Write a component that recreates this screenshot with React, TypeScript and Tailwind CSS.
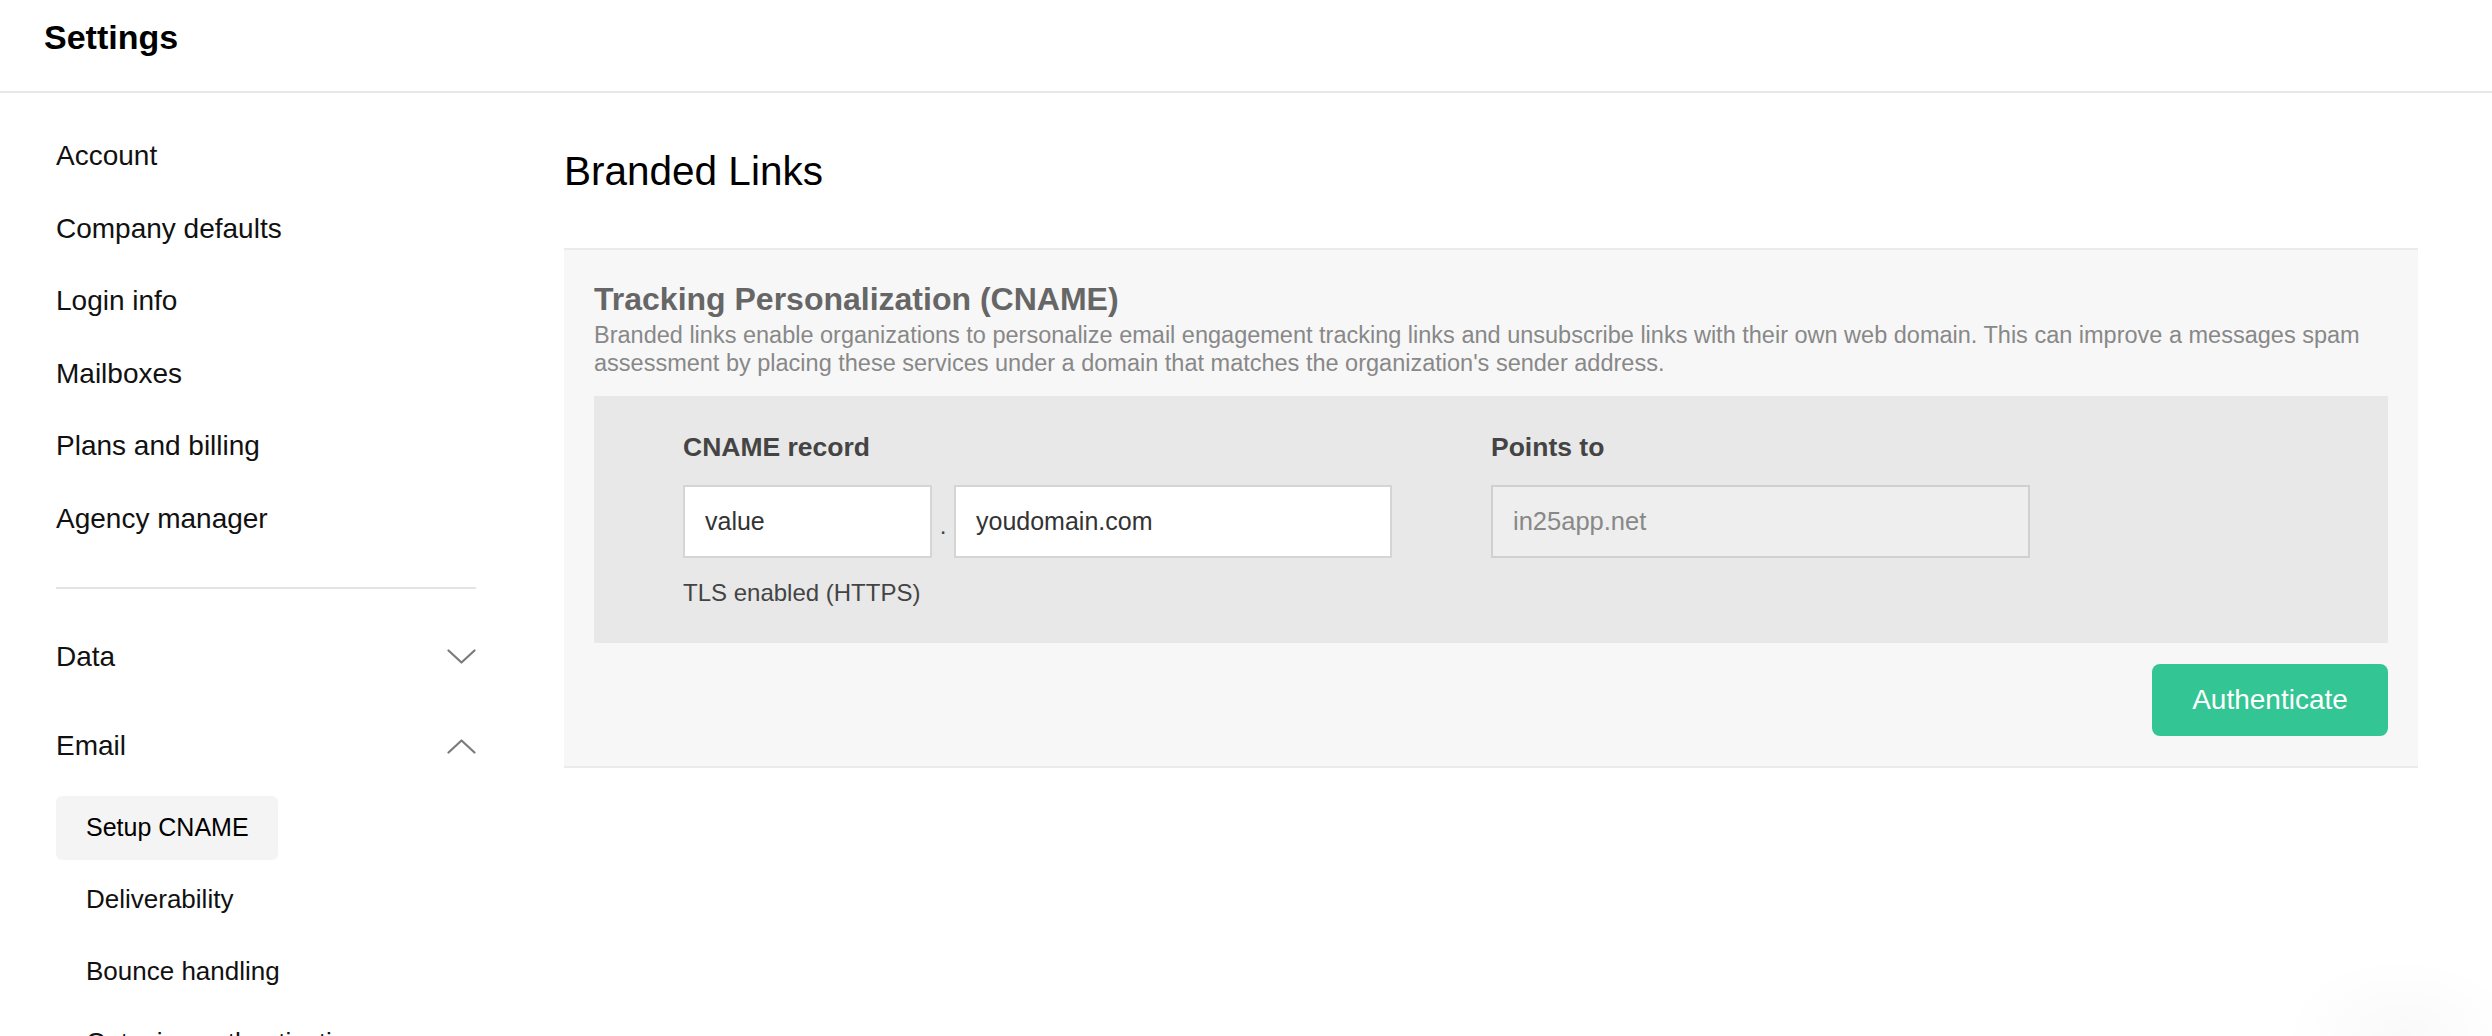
import React from "react";

const MAIN_NAV = ["Account", "Company defaults", "Login info", "Mailboxes", "Plans and billing", "Agency manager"];

const EMAIL_NAV = [
	{ key: "cname", label: "Setup CNAME", active: true },
	{ key: "deliverability", label: "Deliverability", active: false },
	{ key: "bounce", label: "Bounce handling", active: false },
	{ key: "outgoing", label: "Outgoing authentication", active: false },
];

const Chevron = ({ up }: { up?: boolean }) => {
	return (
		<svg width="29" height="15" viewBox="0 0 29 15" fill="none" stroke="#7b7b7b" strokeWidth="2.2" strokeLinecap="round" strokeLinejoin="round">
			<polyline points={up ? "1.5,13.5 14.5,1.5 27.5,13.5" : "1.5,1.5 14.5,13.5 27.5,1.5"} />
		</svg>
	);
};

const Sidebar = () => {
	return (
		<aside className="w-[564px] shrink-0 pl-[56px] pr-[88px] pt-[27px] text-[#111]">
			{MAIN_NAV.map((item) => (
				<div key={item} className="flex h-[72.5px] items-center text-[28px]">
					{item}
				</div>
			))}

			<div className="mt-[32px] h-[2px] bg-[#e4e4e4]" />

			{/* разделы с подменю */}
			<div className="mt-[31.5px] flex h-[72.5px] items-center justify-between text-[28px]">
				<span>Data</span>
				<Chevron />
			</div>
			<div className="mt-[17px] flex h-[72.5px] items-center justify-between text-[28px]">
				<span>Email</span>
				<Chevron up />
			</div>

			<div className="mt-[13.5px] flex flex-col gap-[7.5px]">
				{EMAIL_NAV.map((item) => (
					<div
						key={item.key}
						className={
							item.active
								? "flex h-[64px] w-[222px] items-center rounded-[6px] bg-[#f4f4f4] pl-[30px] text-[25px] font-medium text-black"
								: "flex h-[64px] items-center pl-[30px] text-[26px]"
						}
					>
						{item.label}
					</div>
				))}
			</div>
		</aside>
	);
};

const CnameCard = () => {
	return (
		<div className="border-y-2 border-[#ebebeb] bg-[#f7f7f7] px-[30px] pt-[31px] pb-[30px]">
			<h2 className="text-[32px] leading-[36px] font-bold text-[#666]">Tracking Personalization (CNAME)</h2>
			<p className="mt-[4px] text-[23.5px] leading-[28px] text-[#888]">
				Branded links enable organizations to personalize email engagement tracking links and unsubscribe links with their own web domain. This can improve a messages spam
				<br />
				assessment by placing these services under a domain that matches the organization's sender address.
			</p>

			{/* поля записи */}
			<div className="mt-[19px] flex gap-[99px] bg-[#e8e8e8] pt-[36px] pb-[36px] pl-[89px]">
				<div className="flex flex-col">
					<p className="text-[26.5px] leading-[30px] font-bold text-[#444]">CNAME record</p>
					<div className="mt-[23px] flex items-center">
						<input
							readOnly
							defaultValue="value"
							className="h-[73px] w-[249px] border-2 border-[#d5d5d5] bg-white px-[20px] text-[25px] text-[#333] outline-none"
						/>
						<span className="w-[22px] pt-[8px] text-center text-[24px] text-[#444]">.</span>
						<input
							readOnly
							defaultValue="youdomain.com"
							className="h-[73px] w-[438px] border-2 border-[#d5d5d5] bg-white px-[20px] text-[25px] text-[#333] outline-none"
						/>
					</div>
					<p className="mt-[21px] text-[24px] leading-[28px] text-[#444]">TLS enabled (HTTPS)</p>
				</div>

				<div className="flex flex-col">
					<p className="text-[26.5px] leading-[30px] font-bold text-[#444]">Points to</p>
					<input
						readOnly
						defaultValue="in25app.net"
						className="mt-[23px] h-[73px] w-[539px] border-2 border-[#d0d0d0] bg-[#eeeeee] px-[20px] text-[25.5px] text-[#888] outline-none"
					/>
				</div>
			</div>

			<div className="mt-[21px] flex justify-end">
				<button className="h-[72px] w-[236px] cursor-pointer rounded-[8px] bg-[#33c593] text-[28px] text-white">Authenticate</button>
			</div>
		</div>
	);
};

export default function App() {
	return (
		<div className="relative h-screen w-full overflow-hidden bg-white font-['Liberation_Sans',Arial,sans-serif]">
			<header className="h-[93px] border-b-2 border-[#e8e8e8] pt-[19px] pl-[44px]">
				<h1 className="text-[34px] leading-[36px] font-bold text-black">Settings</h1>
			</header>

			<div className="flex">
				<Sidebar />

				<main className="flex-1 pt-[54px] pr-[74px]">
					<h1 className="h-[48px] text-[40.5px] leading-[48px] text-black">Branded Links</h1>
					<div className="mt-[53px]">
						<CnameCard />
					</div>
				</main>
			</div>

			{/* тень виджета чата */}
			<div className="pointer-events-none absolute right-[-30px] bottom-0 h-[80px] w-[240px] bg-[radial-gradient(ellipse_at_50%_100%,rgba(0,0,0,0.025),transparent_70%)]" />
		</div>
	);
}
